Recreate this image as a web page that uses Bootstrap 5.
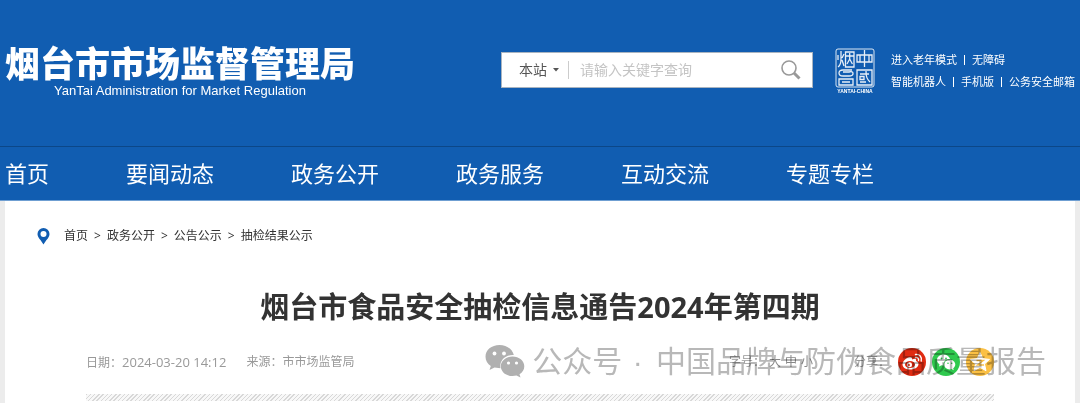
<!DOCTYPE html>
<html lang="zh-CN">
<head>
<meta charset="utf-8">
<meta name="viewport" content="width=device-width, initial-scale=1">
<title>烟台市食品安全抽检信息通告2024年第四期</title>
<link href="https://cdn.jsdelivr.net/npm/bootstrap@5.3.0/dist/css/bootstrap.min.css" rel="stylesheet">
<style>
  body { font-family: "Open Sans", "Noto Sans CJK SC", sans-serif; font-size: 12px; line-height: 20px; background: #ececec; color: #333; overflow: hidden; }
  a { color: inherit; text-decoration: none; }
  .site-head { background: #115db1; color: #fff; }
  .head-row { min-height: 146px; padding: 0 5px 4px; }
  .site-name { font-family: "Noto Sans CJK SC", sans-serif; font-weight: 900; font-size: 35px; line-height: 40px; }
  .site-en { font-family: "Liberation Sans", sans-serif; font-size: 13px; line-height: 18px; }
  .search-box { flex: 0 1 312px; height: 36px; border: 1px solid #a9b4c0; background: #fff; padding: 0 10px 0 17px; margin: 0 22px 2px auto; }
  .scope { border: 0; background: none; color: #555; font-size: 14px; padding: 0; appearance: none; width: 30px; }
  .keyword { border: 0; outline: 0; color: #555; font-size: 14px; padding: 0; width: 100%; min-width: 0; }
  .keyword::placeholder { color: #c4c4c4; }
  .rule { width: 1px; height: 18px; background: #ccc; margin: 0 11px 0 7px; }
  .quick { font-size: 11px; line-height: 22px; margin-left: 16px; }
  .quick i { width: 1px; height: 10px; background: #fff; margin: 0 7px; }
  .main-nav { border-top: 1px solid #0c4788; border-bottom: 1px solid #6f9fd2; gap: 77px; padding: 0 5px; font-size: 22px; line-height: 53px; }
  .sheet { background: #fff; margin: 0 5px; min-height: 203px; }
  .crumbs { padding: 25px 32px 0; gap: 6px; }
  .crumbs svg { margin-right: 8px; }
  .headline { font-size: 29px; font-weight: 700; line-height: 40px; margin: 41px 0 0; text-align: center; }
  .article { padding: 0 81px; }
  .meta { height: 28px; margin-top: 21px; color: #999; position: relative; }
  .meta time { font-size: 13px; }
  .source { margin-left: 20px; }
  .tools { margin-left: auto; }
  .sizes { gap: 4px; margin-right: 41px; }
  .size-btn { border: 0; background: none; padding: 0; color: #888; }
  .share { gap: 6px; }
  .share span { margin-right: 2px; }
  .share a, .share svg { display: block; }
  .hatch { height: 7px; margin-top: 18px; background: repeating-linear-gradient(135deg, #d8d8d8 0 1px, #f8f8f8 1px 3px); }
  .account { position: absolute; right: -52px; top: -9px; color: #b8b8b8; font-size: 30px; line-height: 40px; font-family: "Noto Sans CJK SC", sans-serif; mix-blend-mode: multiply; white-space: nowrap; pointer-events: none; }
  .account svg { margin-right: 7px; }
  .dot { font-family: "Liberation Sans", sans-serif; padding: 0 5px 0 2px; }
</style>
</head>
<body>
<header class="site-head">
  <div class="head-row d-flex align-items-center">
    <a href="#" class="text-center text-nowrap">
      <div class="site-name">烟台市市场监督管理局</div>
      <div class="site-en">YanTai Administration for Market Regulation</div>
    </a>
    <form class="search-box d-flex align-items-center">
      <select class="scope" aria-label="搜索范围"><option>本站</option></select>
      <svg class="flex-shrink-0 ms-1" width="10" height="6" viewBox="0 0 10 6"><path d="M2 1h6L5 4.500z" fill="#555"/></svg>
      <div class="rule flex-shrink-0"></div>
      <input class="keyword" type="text" placeholder="请输入关键字查询" aria-label="关键字">
      <button class="btn p-0 border-0 d-flex" type="button" aria-label="搜索">
        <svg width="22" height="22" viewBox="0 0 22 22" fill="none" stroke="#999"><circle cx="9" cy="9" r="7" stroke-width="1.600"/><path d="M14 14l5.500 5.500" stroke-width="3"/></svg>
      </button>
    </form>
    <svg class="flex-shrink-0" width="40" height="48" viewBox="0 0 40 48" fill="none" stroke="#fff">
      <rect x="1" y="2" width="38" height="38" rx="2" stroke-opacity=".85"/>
      <g stroke-width="1.300" stroke-opacity=".9">
        <path d="M6 4v8q0 6-3 8M3 8v5M9 7l-2 4M7 13l2 6M10.500 5h8.500v15h-8.500zM10.500 9h8.500M14.700 6v6M12 17l2.700-5 2.700 5"/>
        <path d="M22 8h15v7H22zM29.500 3v17M25 8v7M34 8v7"/>
        <path d="M17 23H8q-4 0-4 3t4 3h6q4 0 4-2.500T14 25H8M4 32h14v6H4zM7 35h8"/>
        <path d="M22 23h15v15H22zM25 27h9M31 24c0 6 1 8 4 11M25 29.500h4v3h-4zM25 35h6"/>
      </g>
      <text x="20" y="46" font-size="5" font-weight="700" text-anchor="middle" fill="#fff" stroke="none" font-family="Liberation Sans, sans-serif">YANTAI·CHINA</text>
    </svg>
    <div class="quick text-nowrap">
      <div class="d-flex align-items-center"><a href="#">进入老年模式</a><i></i><a href="#">无障碍</a></div>
      <div class="d-flex align-items-center"><a href="#">智能机器人</a><i></i><a href="#">手机版</a><i></i><a href="#">公务安全邮箱</a></div>
    </div>
  </div>
  <nav class="main-nav d-flex text-nowrap">
    <a href="#">首页</a><a href="#">要闻动态</a><a href="#">政务公开</a><a href="#">政务服务</a><a href="#">互动交流</a><a href="#">专题专栏</a>
  </nav>
</header>
<main class="sheet">
  <nav class="crumbs d-flex align-items-center">
    <svg width="13" height="18" viewBox="0 0 13 18"><path d="M6.500 1A6 6 0 0 0 .5 7c0 3.500 3.500 6 6 10.500C9 13 12.500 10.500 12.500 7a6 6 0 0 0-6-6z" fill="#115db1"/><circle cx="6.500" cy="7" r="3" fill="#fff"/></svg>
    <a href="#">首页</a><span>&gt;</span><a href="#">政务公开</a><span>&gt;</span><a href="#">公告公示</a><span>&gt;</span><a href="#">抽检结果公示</a>
  </nav>
  <h1 class="headline">烟台市食品安全抽检信息通告2024年第四期</h1>
  <div class="article">
    <div class="meta d-flex align-items-center text-nowrap">
      <div>日期：<time>2024-03-20 14:12</time></div>
      <div class="source">来源：市市场监管局</div>
      <div class="tools d-flex align-items-center">
        <div class="sizes d-flex"><span>字号：</span><button class="size-btn" type="button">大</button><button class="size-btn" type="button">中</button><button class="size-btn" type="button">小</button></div>
        <div class="share d-flex align-items-center"><span>分享：</span>
          <a href="#" aria-label="微博"><svg width="28" height="28" viewBox="0 0 28 28"><circle cx="14" cy="14" r="14" fill="#e02b12"/><path d="M12 9c-3 0-7.500 4-7.500 7.500 0 3 3.500 5 7.500 5 5 0 8.500-2.500 8.500-5.500 0-2-1.500-2.500-2.500-3 .5-2-.5-3-4-1.500.3-1.500-.2-2.500-2-2.500z" fill="#fff"/><ellipse cx="12" cy="16.500" rx="5" ry="3.600" fill="#e02b12"/><circle cx="11.500" cy="16.800" r="2.500" fill="#fff"/><circle cx="11" cy="17" r="1" fill="#e02b12"/><path d="M17.500 9.500c2-.5 3.500 1 3 3M17.500 6.500c4-.8 6.800 2.500 5.700 6.500" fill="none" stroke="#fff" stroke-width="1.400" stroke-linecap="round"/></svg></a>
          <a href="#" aria-label="微信"><svg width="28" height="28" viewBox="0 0 28 28"><circle cx="14" cy="14" r="14" fill="#2fc94e"/><path d="M11.500 6.500C7.900 6.500 5 8.900 5 12c0 1.800 1 3.300 2.500 4.300L7 18.500l2.500-1.300 2 .3C11 13.500 14 11 18 11c-.6-2.600-3.300-4.500-6.500-4.500z" fill="#fff"/><path d="M17.800 11.800c-3.200 0-5.600 2.100-5.600 4.800s2.400 4.800 5.600 4.800l1.800-.3 2.100 1.200-.5-2c1.300-.9 2.100-2.200 2.100-3.700 0-2.700-2.400-4.800-5.500-4.800z" fill="#fff"/><g fill="#2fc94e"><circle cx="9.500" cy="10.500" r=".9"/><circle cx="14" cy="10.500" r=".9"/><circle cx="16" cy="15.300" r=".8"/><circle cx="19.700" cy="15.300" r=".8"/></g></svg></a>
          <a href="#" aria-label="QQ空间"><svg width="28" height="28" viewBox="0 0 28 28"><circle cx="14" cy="14" r="14" fill="#fbc044"/><path d="M14 4.500l2.800 6.200 6.700.7-5 4.600 1.500 6.700-6-3.400-6 3.400L9.500 16l-5-4.600 6.700-.7z" fill="#fff" stroke="#fff" stroke-linejoin="round"/><path d="M10.500 12.500h7l-6 4.500h6.500" fill="none" stroke="#fbc044" stroke-width="1.300"/></svg></a>
        </div>
      </div>
      <div class="account d-flex align-items-center">
        <svg width="40" height="34" viewBox="0 0 40 34"><path d="M14.500 1C6.500 1 .5 6 .5 12.700c0 4 2 7.200 5.300 9.300L4.500 26l5-2.500 6 .8C14 17 20 10.500 28.800 11 27.500 5 21.500 1 14.500 1z" fill="#b0b0b0"/><path d="M27.500 12.500c-6.600 0-11.700 4.400-11.700 9.800s5 9.800 11.700 9.800l4-.5 4 2-1-3.300c3-1.800 4.800-4.700 4.800-8 0-5.400-5.200-9.800-11.800-9.800z" fill="#b0b0b0"/><g fill="#fff"><circle cx="9.500" cy="9.500" r="1.900"/><circle cx="19" cy="9.500" r="1.900"/><circle cx="23.500" cy="19" r="1.600"/><circle cx="31.500" cy="19" r="1.600"/></g></svg>
        <span>公众号<span class="dot"> · </span>中国品牌与防伪食品质量报告</span>
      </div>
    </div>
    <div class="hatch"></div>
  </div>
</main>
<script src="https://cdn.jsdelivr.net/npm/bootstrap@5.3.0/dist/js/bootstrap.bundle.min.js"></script>
</body>
</html>
